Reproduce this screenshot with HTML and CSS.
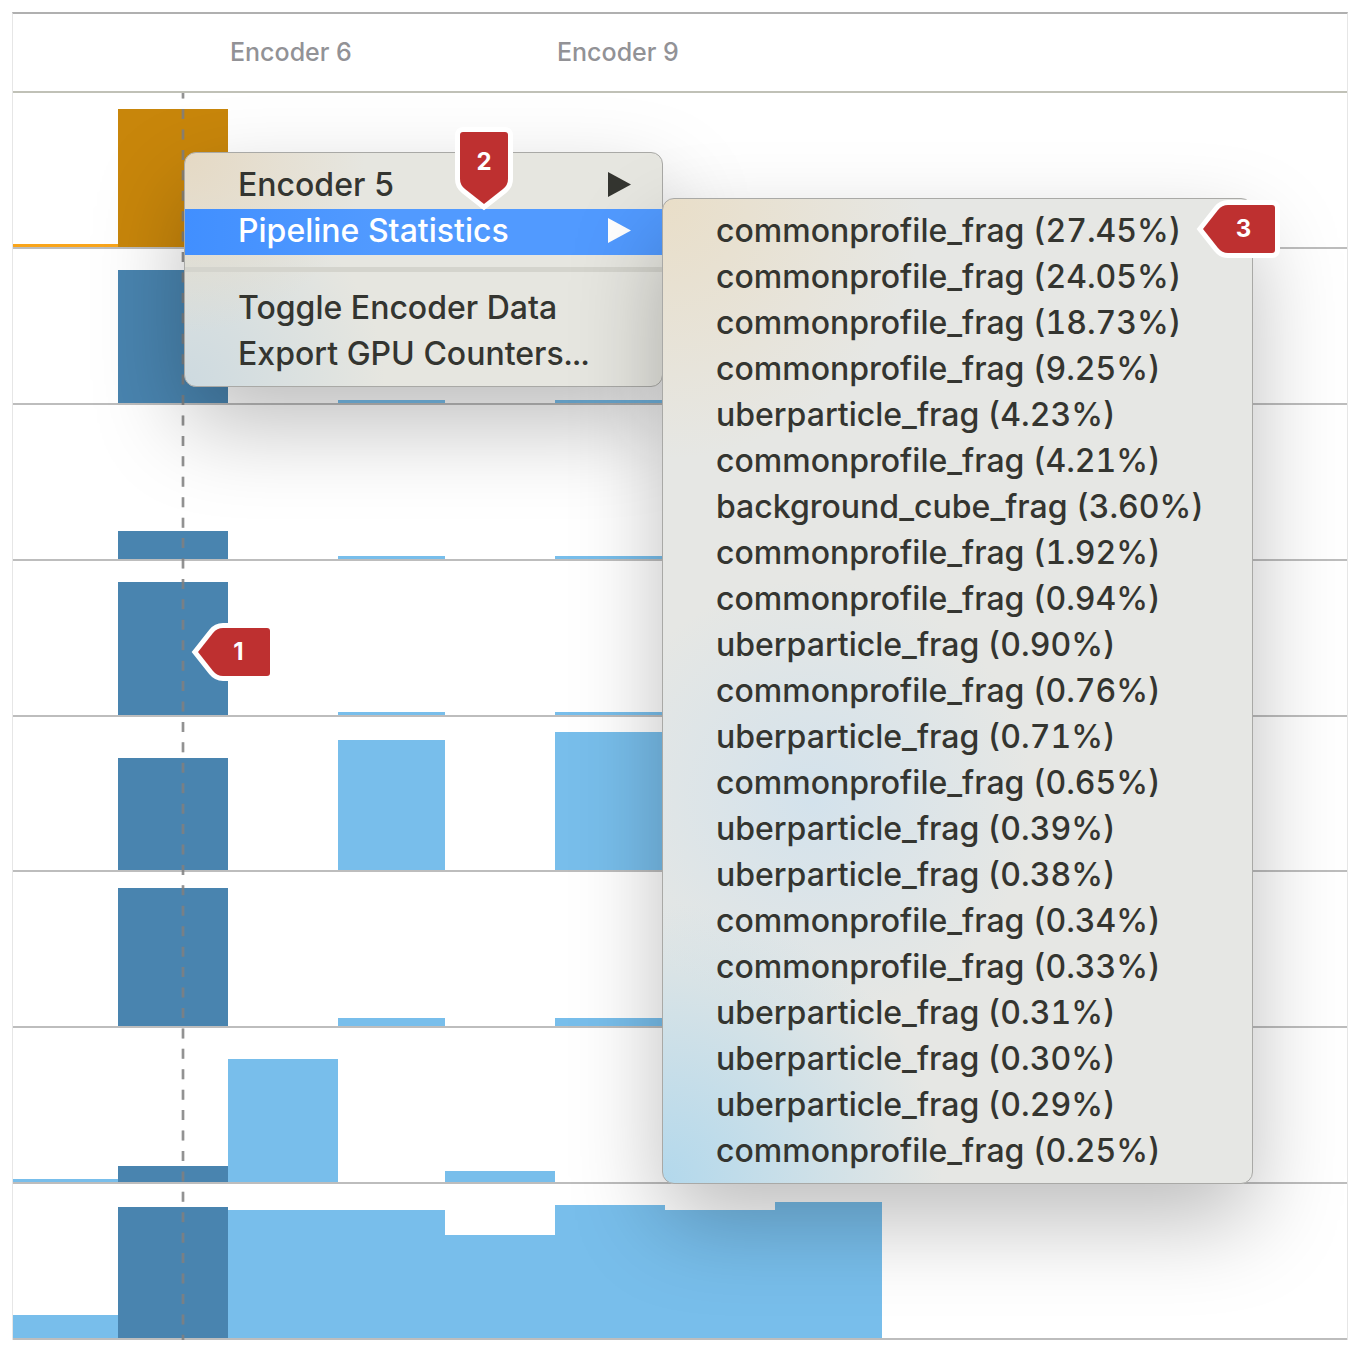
FILE: index.html
```html
<!DOCTYPE html>
<html lang="en">
<head>
<meta charset="utf-8">
<title>GPU Counters</title>
<link rel="stylesheet" href="styles.css">
</head>
<body>
<main class="panel">
  <header class="track header">
    <span class="label at-3">Encoder 6</span>
    <span class="label at-6">Encoder 9</span>
  </header>
  <section class="rows">
    <div class="track row warm">
      <i class="bar at-1" style="height:3px"></i><i class="bar at-2 selected" style="height:138px"></i>
    </div>
    <div class="track row">
      <i class="bar at-2 selected" style="height:133px"></i><i class="bar at-4" style="height:3px"></i><i class="bar at-6" style="height:3px"></i>
    </div>
    <div class="track row">
      <i class="bar at-2 selected" style="height:28px"></i><i class="bar at-4" style="height:3px"></i><i class="bar at-6" style="height:3px"></i>
    </div>
    <div class="track row">
      <i class="bar at-2 selected" style="height:133px"></i><i class="bar at-4" style="height:3px"></i><i class="bar at-6" style="height:3px"></i>
    </div>
    <div class="track row">
      <i class="bar at-2 selected" style="height:112px"></i><i class="bar at-4" style="height:130px"></i><i class="bar at-6" style="height:138px"></i>
    </div>
    <div class="track row">
      <i class="bar at-2 selected" style="height:138px"></i><i class="bar at-4" style="height:8px"></i><i class="bar at-6" style="height:8px"></i>
    </div>
    <div class="track row">
      <i class="bar at-1" style="height:3px"></i><i class="bar at-2 selected" style="height:16px"></i><i class="bar at-3" style="height:123px"></i><i class="bar at-5" style="height:11px"></i>
    </div>
    <div class="track row">
      <i class="bar at-1" style="height:23px"></i><i class="bar at-2 selected" style="height:131px"></i><i class="bar at-3" style="height:128px"></i><i class="bar at-4" style="height:128px"></i><i class="bar at-5" style="height:103px"></i><i class="bar at-6" style="height:133px"></i><i class="bar at-7" style="height:128px"></i><i class="bar at-8" style="height:136px"></i>
    </div>
    <svg class="cursor" width="4" height="100%" aria-hidden="true">
      <line x1="2" y1="0" x2="2" y2="100%" stroke="#808080" stroke-opacity=".3" stroke-width="4" stroke-dasharray="10 10.43" stroke-dashoffset="4.4"/>
      <line x1="2" y1="0" x2="2" y2="100%" stroke="#808080" stroke-opacity=".8" stroke-width="2" stroke-dasharray="10 10.43" stroke-dashoffset="4.4"/>
    </svg>
  </section>

  <ul class="menu context" role="menu">
    <li role="none"><button class="item" role="menuitem">Encoder 5<svg class="arrow" width="23" height="25" viewBox="0 0 23 25" aria-hidden="true"><path d="M0 0 23 12.5 0 25z"/></svg></button></li>
    <li class="parent" role="none"><button class="item active" role="menuitem">Pipeline Statistics<svg class="arrow" width="23" height="25" viewBox="0 0 23 25" aria-hidden="true"><path d="M0 0 23 12.5 0 25z"/></svg></button>
      <ul class="menu submenu" role="menu">
        <li role="none"><button class="item" role="menuitem">commonprofile_frag (27.45%)</button></li>
        <li role="none"><button class="item" role="menuitem">commonprofile_frag (24.05%)</button></li>
        <li role="none"><button class="item" role="menuitem">commonprofile_frag (18.73%)</button></li>
        <li role="none"><button class="item" role="menuitem">commonprofile_frag (9.25%)</button></li>
        <li role="none"><button class="item" role="menuitem">uberparticle_frag (4.23%)</button></li>
        <li role="none"><button class="item" role="menuitem">commonprofile_frag (4.21%)</button></li>
        <li role="none"><button class="item" role="menuitem">background_cube_frag (3.60%)</button></li>
        <li role="none"><button class="item" role="menuitem">commonprofile_frag (1.92%)</button></li>
        <li role="none"><button class="item" role="menuitem">commonprofile_frag (0.94%)</button></li>
        <li role="none"><button class="item" role="menuitem">uberparticle_frag (0.90%)</button></li>
        <li role="none"><button class="item" role="menuitem">commonprofile_frag (0.76%)</button></li>
        <li role="none"><button class="item" role="menuitem">uberparticle_frag (0.71%)</button></li>
        <li role="none"><button class="item" role="menuitem">commonprofile_frag (0.65%)</button></li>
        <li role="none"><button class="item" role="menuitem">uberparticle_frag (0.39%)</button></li>
        <li role="none"><button class="item" role="menuitem">uberparticle_frag (0.38%)</button></li>
        <li role="none"><button class="item" role="menuitem">commonprofile_frag (0.34%)</button></li>
        <li role="none"><button class="item" role="menuitem">commonprofile_frag (0.33%)</button></li>
        <li role="none"><button class="item" role="menuitem">uberparticle_frag (0.31%)</button></li>
        <li role="none"><button class="item" role="menuitem">uberparticle_frag (0.30%)</button></li>
        <li role="none"><button class="item" role="menuitem">uberparticle_frag (0.29%)</button></li>
        <li role="none"><button class="item" role="menuitem">commonprofile_frag (0.25%)</button></li>
      </ul>
    </li>
    <li class="separator" role="separator"></li>
    <li role="none"><button class="item" role="menuitem">Toggle Encoder Data</button></li>
    <li role="none"><button class="item" role="menuitem">Export GPU Counters...</button></li>
  </ul>

  <div class="tag side one"><svg viewBox="0 0 72 48" aria-hidden="true"><path d="M0 24 15 5Q19 0 25 0H69Q72 0 72 3V45Q72 48 69 48H25Q19 48 15 43Z"/></svg><b>1</b></div>
  <div class="tag down two"><svg viewBox="0 0 48 72" aria-hidden="true"><path d="M24 72 5 57Q0 53 0 47V3Q0 0 3 0H45Q48 0 48 3V47Q48 53 43 57Z"/></svg><b>2</b></div>
  <div class="tag side three"><svg viewBox="0 0 72 48" aria-hidden="true"><path d="M0 24 15 5Q19 0 25 0H69Q72 0 72 3V45Q72 48 69 48H25Q19 48 15 43Z"/></svg><b>3</b></div>
</main>
</body>
</html>
```
FILE: styles.css
```css
* {
  box-sizing: border-box;
}

body {
  margin: 0;
  padding: 12px;
  background: #fff;
  font-family: Inter, "Liberation Sans", sans-serif;
  font-optical-sizing: none;
}

.panel {
  position: relative;
  display: flex;
  flex-direction: column;
  min-height: calc(100vh - 24px);
  border: 1px solid #e6e6e6;
  border-top: 2px solid #b0b0b0;
  border-bottom: 0;
}

/* Encoder columns, shared by the header and every counter row */
.track {
  display: grid;
  grid-template-columns: 105px 110px 110px 107px 110px 110px 110px 107px;
  grid-template-rows: 100%;
}

.at-1 { grid-column: 1; }
.at-2 { grid-column: 2; }
.at-3 { grid-column: 3; }
.at-4 { grid-column: 4; }
.at-5 { grid-column: 5; }
.at-6 { grid-column: 6; }
.at-7 { grid-column: 7; }
.at-8 { grid-column: 8; }

.header {
  height: 79px;
  padding-bottom: 2px;
  align-items: center;
  border-bottom: 2px solid #c0c1b7;
}

.label {
  grid-row: 1;
  padding-left: 2px;
  color: #929296;
  font-size: 25px;
  font-weight: 500;
  line-height: 32px;
  white-space: nowrap;
}

.rows {
  position: relative;
  flex: 1;
  display: flex;
  flex-direction: column;
}

.row {
  flex: 1 0 155px;
  align-items: end;
  border-bottom: 2px solid #bdbdbd;
}

.bar {
  grid-row: 1;
  background: #78beeb;
}

.bar.selected {
  background: #4984af;
}

.warm .bar {
  background: #f9a51b;
}

.warm .bar.selected {
  background: #c8860b;
}

.cursor {
  position: absolute;
  left: 168px;
  top: 0;
}

.menu {
  position: absolute;
  margin: 0;
  padding: 10px 0 8px;
  list-style: none;
  border: 1px solid #a9a9a6;
  border-radius: 12px;
  box-shadow: 0 38px 90px rgba(0, 0, 0, .26);
}

.context {
  left: 171px;
  top: 138px;
  width: 479px;
  background:
    radial-gradient(circle at 0 0, #e5d9c4, rgba(229, 217, 196, 0) 180px),
    radial-gradient(circle at 0 100%, #cddae0, rgba(205, 218, 224, 0) 200px),
    #e6e6e0;
}

.submenu {
  left: 100%;
  top: -11px;
  width: 591px;
  background:
    radial-gradient(circle at 0 0, #e9dec8, rgba(233, 222, 200, 0) 260px),
    radial-gradient(circle at 0 100%, #b2d8ec, rgba(178, 216, 236, 0) 280px),
    radial-gradient(circle at 150px 600px, #d3e2ec, rgba(211, 226, 236, 0) 220px),
    #e6e7e4;
}

.parent {
  position: relative;
  z-index: 1;
}

.item {
  display: flex;
  align-items: center;
  justify-content: space-between;
  width: 100%;
  height: 46px;
  padding: 0 31px 3px 53px;
  border: 0;
  background: none;
  color: #343530;
  font: inherit;
  font-size: 32px;
  font-weight: 500;
  font-variant-numeric: tabular-nums;
  line-height: 40px;
  white-space: nowrap;
}

.item.active {
  background: linear-gradient(90deg, #418fff, #519aff 40%, #519aff);
  color: #fff;
}

.arrow {
  fill: currentColor;
}

.separator {
  height: 5px;
  margin: 12px 0 14px;
  background: #d4d4cd;
}

.tag {
  position: absolute;
  z-index: 2;
  display: grid;
  place-items: center;
  color: #fff;
  font-size: 24px;
  line-height: 28px;
}

.tag svg {
  position: absolute;
  inset: 0;
  overflow: visible;
  fill: #be3030;
  stroke: #fff;
  stroke-width: 10px;
  paint-order: stroke;
}

.tag b {
  position: relative;
}

.side {
  width: 72px;
  height: 48px;
  padding-left: 9px;
}

.down {
  width: 48px;
  height: 72px;
  padding-bottom: 12px;
}

.one {
  left: 185px;
  top: 614px;
}

.two {
  left: 447px;
  top: 118px;
}

.three {
  left: 1190px;
  top: 191px;
}
```
